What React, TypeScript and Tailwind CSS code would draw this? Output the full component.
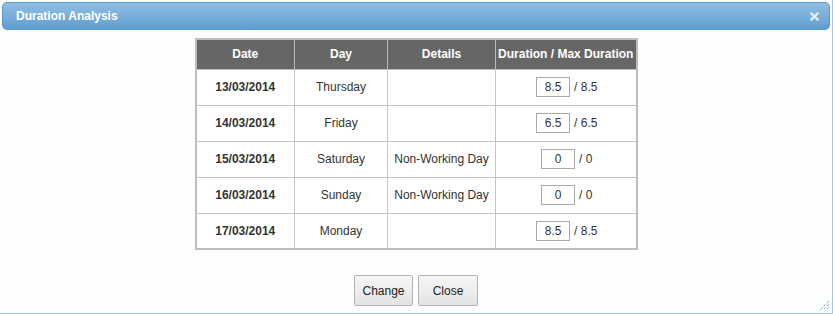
import React from "react";

type Row = { date: string; day: string; details: string; dur: string; max: string };

const rows: Row[] = [
  { date: "13/03/2014", day: "Thursday", details: "", dur: "8.5", max: "8.5" },
  { date: "14/03/2014", day: "Friday", details: "", dur: "6.5", max: "6.5" },
  { date: "15/03/2014", day: "Saturday", details: "Non-Working Day", dur: "0", max: "0" },
  { date: "16/03/2014", day: "Sunday", details: "Non-Working Day", dur: "0", max: "0" },
  { date: "17/03/2014", day: "Monday", details: "", dur: "8.5", max: "8.5" },
];

export default function App() {
  return (
    <div
      className="relative w-[833px] h-[314px] bg-[#fdfefe] border-r border-b border-[#a6c9e2] overflow-hidden text-[12px] text-[#222]"
      style={{ fontFamily: "'Liberation Sans', Arial, sans-serif" }}
    >
      {/* Title bar */}
      <div className="mx-[2px] mt-[2px] h-[28px] rounded-[5px] border border-[#5b97ca] bg-gradient-to-b from-[#8fbde2] via-[#7aafdb] to-[#5d9dd0] flex items-center justify-between pl-[13px] pr-[10px]">
        <span className="font-bold text-white text-[12px]">Duration Analysis</span>
        <svg width="9" height="9" viewBox="0 0 9 9">
          <path d="M1.5 1.5 L7.5 7.5 M7.5 1.5 L1.5 7.5" stroke="#e3eef8" strokeWidth="2.4" strokeLinecap="square" />
        </svg>
      </div>

      {/* Table */}
      <div className="flex justify-center mt-[8px]">
        <table className="border-collapse border-2 border-[#bdbdbd]">
          <thead>
            <tr className="bg-[#666666] text-white font-bold h-[30px]">
              <th className="w-[99px] border border-[#bdbdbd] font-bold">Date</th>
              <th className="w-[93px] border border-[#bdbdbd] font-bold">Day</th>
              <th className="w-[108px] border border-[#bdbdbd] font-bold">Details</th>
              <th className="w-[141px] border border-[#bdbdbd] font-bold whitespace-nowrap">Duration / Max Duration</th>
            </tr>
          </thead>
          <tbody>
            {rows.map((r) => (
              <tr key={r.date} className="h-[36px] bg-white">
                <td className="border border-[#c4c4c4] text-center font-bold text-[#333]">{r.date}</td>
                <td className="border border-[#c4c4c4] text-center text-[#333]">{r.day}</td>
                <td className="border border-[#c4c4c4] text-center text-[#333] whitespace-nowrap">{r.details}</td>
                <td className="border border-[#c4c4c4] text-[#333]">
                  <div className="flex items-center justify-center gap-[4px] pl-[2px]">
                    <span className="w-[34px] h-[20px] border border-[#aaaaaa] bg-white flex items-center justify-center">
                      {r.dur}
                    </span>
                    <span>/ {r.max}</span>
                  </div>
                </td>
              </tr>
            ))}
          </tbody>
        </table>
      </div>

      {/* Buttons */}
      <div className="flex justify-center gap-[5px] mt-[25px]">
        <button className="w-[59px] h-[31px] border border-[#b5b5b5] rounded-[2px] bg-gradient-to-b from-[#f7f7f7] to-[#e2e2e2] text-[#222] text-[12px]">
          Change
        </button>
        <button className="w-[60px] h-[31px] border border-[#b5b5b5] rounded-[2px] bg-gradient-to-b from-[#f7f7f7] to-[#e2e2e2] text-[#222] text-[12px]">
          Close
        </button>
      </div>

      {/* Resize grip */}
      <svg className="absolute right-[2px] bottom-[2px]" width="12" height="12" viewBox="0 0 12 12">
        <path d="M11 2 L2 11 M11 5 L5 11 M11 8 L8 11" stroke="#4f8cc4" strokeWidth="1" strokeDasharray="1 1" />
      </svg>
    </div>
  );
}
